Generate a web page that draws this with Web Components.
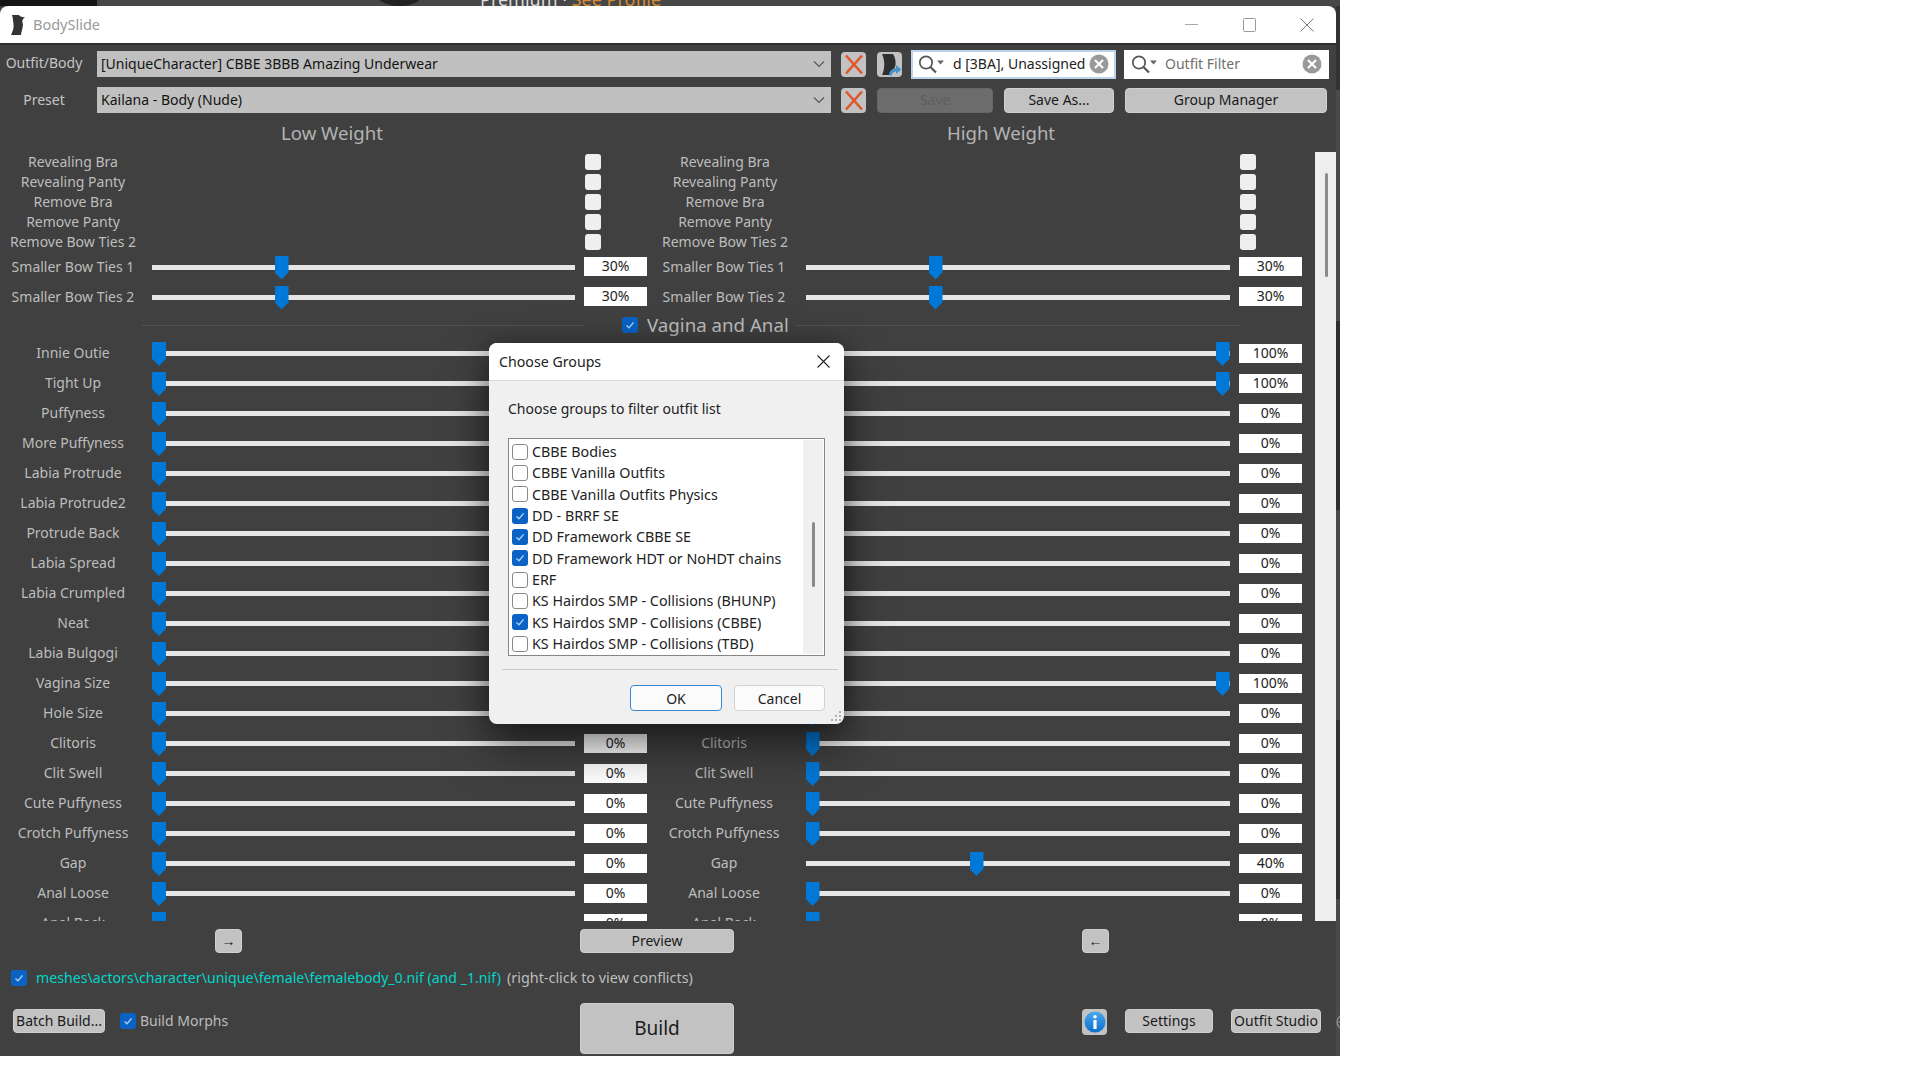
<!DOCTYPE html>
<html>
<head>
<meta charset="utf-8">
<title>BodySlide</title>
<style>
  html, body { margin: 0; background: #fff; }
  body { font-family: "Noto Sans", "Open Sans", sans-serif; font-size: 14px; width: 1920px; height: 1080px; overflow: hidden; position: relative; }
</style>
</head>
<body>
<bs-desktop>
  <bs-window>
    <bs-toolbar></bs-toolbar>
    <bs-panel>
      <bs-check-row label="Revealing Bra"></bs-check-row>
      <bs-check-row label="Revealing Panty"></bs-check-row>
      <bs-check-row label="Remove Bra"></bs-check-row>
      <bs-check-row label="Remove Panty"></bs-check-row>
      <bs-check-row label="Remove Bow Ties 2"></bs-check-row>
      <bs-row label="Smaller Bow Ties 1" low="30" high="30"></bs-row>
      <bs-row label="Smaller Bow Ties 2" low="30" high="30"></bs-row>
      <bs-section label="Vagina and Anal"></bs-section>
      <!-- covered: the dialog lies over the left value and the right label of these rows -->
      <bs-row covered label="Innie Outie" low="0" high="100"></bs-row>
      <bs-row covered label="Tight Up" low="0" high="100"></bs-row>
      <bs-row covered label="Puffyness" low="0" high="0"></bs-row>
      <bs-row covered label="More Puffyness" low="0" high="0"></bs-row>
      <bs-row covered label="Labia Protrude" low="0" high="0"></bs-row>
      <bs-row covered label="Labia Protrude2" low="0" high="0"></bs-row>
      <bs-row covered label="Protrude Back" low="0" high="0"></bs-row>
      <bs-row covered label="Labia Spread" low="0" high="0"></bs-row>
      <bs-row covered label="Labia Crumpled" low="0" high="0"></bs-row>
      <bs-row covered label="Neat" low="0" high="0"></bs-row>
      <bs-row covered label="Labia Bulgogi" low="0" high="0"></bs-row>
      <bs-row covered label="Vagina Size" low="0" high="100"></bs-row>
      <bs-row covered label="Hole Size" low="0" high="0"></bs-row>
      <bs-row label="Clitoris" low="0" high="0"></bs-row>
      <bs-row label="Clit Swell" low="0" high="0"></bs-row>
      <bs-row label="Cute Puffyness" low="0" high="0"></bs-row>
      <bs-row label="Crotch Puffyness" low="0" high="0"></bs-row>
      <bs-row label="Gap" low="0" high="40"></bs-row>
      <bs-row label="Anal Loose" low="0" high="0"></bs-row>
      <bs-row label="Anal Back" low="0" high="0"></bs-row>
    </bs-panel>
    <bs-footer></bs-footer>
  </bs-window>
</bs-desktop>

<bs-dialog>
  <bs-item>CBBE Bodies</bs-item>
  <bs-item>CBBE Vanilla Outfits</bs-item>
  <bs-item>CBBE Vanilla Outfits Physics</bs-item>
  <bs-item checked>DD - BRRF SE</bs-item>
  <bs-item checked>DD Framework CBBE SE</bs-item>
  <bs-item checked>DD Framework HDT or NoHDT chains</bs-item>
  <bs-item>ERF</bs-item>
  <bs-item>KS Hairdos SMP - Collisions (BHUNP)</bs-item>
  <bs-item checked>KS Hairdos SMP - Collisions (CBBE)</bs-item>
  <bs-item>KS Hairdos SMP - Collisions (TBD)</bs-item>
</bs-dialog>

<script>
const FONT = `"Noto Sans", "Open Sans", sans-serif`;
const CHECK_SVG = `<svg viewBox="0 0 16 16" width="16" height="16"><path d="M4.5 8.4 7 10.8 11.6 5.4" fill="none" stroke="#a9d0f2" stroke-width="1.4"/></svg>`;

class BsBox extends HTMLElement {
    constructor() {
        super();
        this.myRoot = this.attachShadow({ mode: "open" });
    }
    connectedCallback() {
        this.myRoot.innerHTML = this.render();
    }
}

class BsCheck extends BsBox {
    render() {
        const on = this.hasAttribute("checked");
        return `<style>
            :host { display: block; width: 16px; height: 16px; flex: none; }
            div { width: 16px; height: 16px; box-sizing: border-box; border-radius: 3px;
                  background: ${on ? "#0a62c4" : "#efefef"}; }
            svg { display: block; }
        </style><div>${on ? CHECK_SVG : ""}</div>`;
    }
}
customElements.define("bs-check", BsCheck);

class BsBtn extends BsBox {
    render() {
        const off = this.hasAttribute("disabled");
        const size = this.getAttribute("size") ?? "14";
        return `<style>
            :host { display: flex; flex: none; height: 25px; }
            button { all: unset; box-sizing: border-box; width: 100%; height: 100%; display: flex;
                     align-items: center; justify-content: center; border-radius: 4px;
                     font: ${size}px ${FONT}; white-space: nowrap; padding-bottom: 1px;
                     background: ${off ? "#6c6c6c" : "#c2c2c2"}; color: ${off ? "#5e5e5e" : "#1a1a1a"};
                     border: 1px solid ${off ? "#666" : "#cfcfcf"}; }
        </style><button><slot></slot></button>`;
    }
}
customElements.define("bs-btn", BsBtn);

class BsCombo extends BsBox {
    render() {
        return `<style>
            :host { display: flex; width: 734px; height: 26px; flex: none; background: #c0c0c0; align-items: center;
                    box-sizing: border-box; padding: 0 4px; color: #141414; font: 14px ${FONT}; justify-content: space-between; }
            span { padding-bottom: 1px; }
            svg { margin-right: 2px; }
        </style><span><slot></slot></span>
        <svg width="12" height="8" viewBox="0 0 12 8"><path d="M1 1.5 6 6.5 11 1.5" fill="none" stroke="#555" stroke-width="1.1"/></svg>`;
    }
}
customElements.define("bs-combo", BsCombo);

class BsCross extends BsBox {
    render() {
        return `<style>
            :host { display: flex; width: 25px; height: 25px; flex: none; background: #c2c2c2; border-radius: 4px;
                    align-items: center; justify-content: center; }
        </style><svg width="20" height="21" viewBox="0 0 20 21"><path d="M2 1.5 18 19.5M18 1.5 2 19.5" stroke="#e0562a" stroke-width="2.6" fill="none"/></svg>`;
    }
}
customElements.define("bs-cross", BsCross);

class BsSearch extends BsBox {
    render() {
        const ph = this.hasAttribute("placeholder");
        const text = ph ? this.getAttribute("placeholder") : this.getAttribute("value");
        return `<style>
            :host { display: flex; width: 205px; height: 29px; flex: none; box-sizing: border-box; background: #fff;
                    align-items: center; font: 14px ${FONT}; color: ${ph ? "#6f6f6f" : "#222"};
                    border: ${this.hasAttribute("focused") ? "2px solid #bcd3ee" : "2px solid #fff"}; }
            .ico { margin-left: 4px; flex: none; }
            span { flex: 1; margin-left: ${ph ? "7px" : "8px"}; white-space: nowrap; overflow: hidden; padding-bottom: 3px; }
            .clr { flex: none; margin-right: 5px; margin-bottom: 1px; }
        </style>
        <svg class="ico" width="28" height="22" viewBox="0 0 28 22">
            <circle cx="9" cy="8.5" r="6.2" fill="none" stroke="#555" stroke-width="1.7"/>
            <path d="M13.5 13 19 18.5" stroke="#555" stroke-width="2.2"/>
            <path d="M20 6.5h7l-3.5 4z" fill="#666"/>
        </svg>
        <span>${text}</span>
        <svg class="clr" width="20" height="20" viewBox="0 0 20 20">
            <circle cx="10" cy="10" r="9.5" fill="#9a9a9a"/>
            <path d="M6 6 14 14M14 6 6 14" stroke="#fff" stroke-width="2.2"/>
        </svg>`;
    }
}
customElements.define("bs-search", BsSearch);

class BsDesktop extends BsBox {
    render() {
        return `<style>
            :host { display: flex; flex-direction: column; width: 1340px; height: 1056px; background: #3c3c3c; }
            .top { height: 6px; flex: none; overflow: hidden; display: flex; background: #474747; font: 18px/20px ${FONT}; white-space: nowrap; }
            .dark { width: 97px; background: #141414; flex: none; }
            .blob { width: 45px; height: 22px; margin: -16px 0 0 280px; flex: none; background: #222; border-radius: 50%; }
            .promo { margin: -11px 0 0 58px; color: #ddd; }
            .promo b { font-weight: 400; color: #d78a35; }
            .main { flex: 1; display: flex; min-height: 0; }
            .edge { width: 4px; flex: none; position: relative; overflow: hidden;
                    background: linear-gradient(#333 0 8%, #4a4a4a 8% 30%, #2f2f2f 30% 48%, #4a4a4a 48% 68%, #333 68% 85%, #4a4a4a 85%); }
            .edge svg { position: absolute; left: 0; top: 1006px; }
        </style>
        <div class="top"><div class="dark"></div><div class="blob"></div><div class="promo">Premium &middot; <b>See Profile</b></div></div>
        <div class="main"><slot></slot>
            <div class="edge"><svg width="12" height="20" viewBox="0 0 12 20"><circle cx="8" cy="10" r="7" fill="none" stroke="#999" stroke-width="1.2"/><path d="M2 10h8" stroke="#999"/></svg></div>
        </div>`;
    }
}
customElements.define("bs-desktop", BsDesktop);

class BsWindow extends BsBox {
    render() {
        return `<style>
            :host { display: flex; flex-direction: column; width: 1336px; flex: none; background: #404040; }
            .title { height: 37px; flex: none; background: #fff; border-radius: 8px 8px 0 0; display: flex; align-items: center;
                     font: 14.5px ${FONT}; color: #9a9a9a; }
            .logo { margin-left: 10px; flex: none; }
            .name { margin-left: 7px; flex: 1; padding-bottom: 2px; }
            .line { height: 2px; flex: none; background: #2e2e2e; }
            .win { display: flex; align-items: center; width: 58px; justify-content: center; flex: none; }
            .ctl { display: flex; }
        </style>
        <div class="title">
            <svg class="logo" width="16" height="22" viewBox="0 0 16 22"><path d="M2 1 9 1C10 3 13 3 15 3.5 12 5 12 8 13 10 13 14 11 18 11 21L1 21C3 17 4 13 3.5 10 3 7 3 4 2 1Z" fill="#333"/></svg>
            <div class="name">BodySlide</div>
            <div class="ctl">
                <div class="win"><svg width="13" height="13" viewBox="0 0 13 13"><path d="M0 6.5h13" stroke="#aaa"/></svg></div>
                <div class="win"><svg width="13" height="14" viewBox="0 0 13 14"><rect x=".5" y=".5" width="12" height="13" rx="1" fill="none" stroke="#999"/></svg></div>
                <div class="win"><svg width="14" height="14" viewBox="0 0 14 14"><path d="M.5.5 13.5 13.5M13.5.5.5 13.5" stroke="#777"/></svg></div>
            </div>
        </div>
        <div class="line"></div>
        <slot></slot>`;
    }
}
customElements.define("bs-window", BsWindow);

class BsToolbar extends BsBox {
    render() {
        return `<style>
            :host { display: block; color: #c4c4c4; font: 14px ${FONT}; }
            .row { display: flex; align-items: center; }
            .r1 { height: 29px; margin-top: 5px; align-items: flex-start; }
            .r1 .lbl { line-height: 26px; margin-top: 0; }
            .r1 bs-combo { margin-top: 1px; }
            .r1 bs-cross, .r1 .i { margin-top: 2px; }
            .r2 { height: 26px; margin-top: 8px; }
            .lbl { width: 88px; text-align: center; flex: none; margin-right: 9px; }
            .r2 .lbl { padding-bottom: 1px; }
            .heads { display: grid; grid-template-columns: 664px 674px; height: 39px; align-items: center; text-align: center;
                     font-size: 18.6px; color: #b4b4b4; }
            .i { background: #c2c2c2; width: 25px; height: 25px; border-radius: 4px; flex: none; }
        </style>
        <div class="row r1">
            <div class="lbl">Outfit/Body</div>
            <bs-combo>[UniqueCharacter] CBBE 3BBB Amazing Underwear</bs-combo>
            <bs-cross style="margin-left:10px"></bs-cross>
            <svg class="i" style="margin-left:11px" viewBox="0 0 25 25">
                <path d="M5 2 16 2C18 5 19 9 18.5 13 18 16 16 19 13 23L5 23C8 17 8 8 5 2Z" fill="#2f2f2f"/>
                <path d="M12 23C12.500 19 15 16.500 19 16L19 13 24.500 17.500 19 22 19 19.500C16.500 19.500 15 21 14.500 24Z" fill="#4a94cc"/>
            </svg>
            <bs-search focused value="d [3BA], Unassigned" style="margin-left:9px"></bs-search>
            <bs-search placeholder="Outfit Filter" style="margin-left:8px"></bs-search>
        </div>
        <div class="row r2">
            <div class="lbl">Preset</div>
            <bs-combo>Kailana - Body (Nude)</bs-combo>
            <bs-cross style="margin-left:10px"></bs-cross>
            <bs-btn disabled style="width:116px;margin-left:11px">Save</bs-btn>
            <bs-btn style="width:110px;margin-left:11px">Save As...</bs-btn>
            <bs-btn style="width:202px;margin-left:11px">Group Manager</bs-btn>
        </div>
        <div class="heads"><div>Low Weight</div><div>High Weight</div></div>`;
    }
}
customElements.define("bs-toolbar", BsToolbar);

class BsPanel extends BsBox {
    render() {
        return `<style>
            :host { display: flex; height: 769px; flex: none; overflow: hidden; }
            .rows { width: 1315px; flex: none; overflow: hidden; }
            .bar { width: 21px; flex: none; background: #eeeeee; box-sizing: border-box; padding: 21px 0 0 10px; }
            .thumb { width: 2.5px; height: 104px; background: #8a8a8a; border-radius: 2px; }
        </style>
        <div class="rows"><slot></slot></div>
        <div class="bar"><div class="thumb"></div></div>`;
    }
}
customElements.define("bs-panel", BsPanel);

class BsCheckRow extends BsBox {
    render() {
        const label = this.getAttribute("label");
        return `<style>
            :host { display: flex; height: 20px; align-items: center; color: #bdbdbd; font: 14px ${FONT}; }
            .l { width: 146px; text-align: center; flex: none; white-space: nowrap; padding-bottom: 2px; }
            .a { margin-left: 439px; }
            .l2 { margin-left: 51px; }
            .b { margin-left: 442px; }
        </style>
        <div class="l">${label}</div><bs-check class="a"></bs-check>
        <div class="l l2">${label}</div><bs-check class="b"></bs-check>`;
    }
}
customElements.define("bs-check-row", BsCheckRow);

class BsSlider extends BsBox {
    render() {
        const pct = Number(this.getAttribute("value"));
        const label = this.hasAttribute("nolabel") ? "" : this.getAttribute("label");
        const value = this.hasAttribute("novalue") ? "" : `${pct}%`;
        return `<style>
            :host { display: flex; align-items: center; height: 30px; flex: none; color: #bdbdbd; font: 14px ${FONT}; }
            .l { width: 146px; flex: none; text-align: center; white-space: nowrap; padding-bottom: 2px; }
            .track { flex: 1; height: 5px; background: #e6e6e6; position: relative; }
            .thumb { position: absolute; top: -9px; width: 14px; height: 24px; background: #0078d7;
                     left: calc((100% - 14px) * ${pct / 100});
                     clip-path: polygon(0 0, 100% 0, 100% 70%, 50% 100%, 0 70%); }
            .v { width: 63px; height: 19px; line-height: 18px; background: #fff; flex: none; color: #222; text-align: center;
                 margin-left: 9.5px; margin-bottom: 1px; }
        </style>
        <div class="l">${label}</div>
        <div class="track" style="margin-left:${this.getAttribute("gap")}px"><div class="thumb"></div></div>
        <div class="v">${value}</div>`;
    }
}
customElements.define("bs-slider", BsSlider);

class BsRow extends BsBox {
    render() {
        const label = this.getAttribute("label");
        const covered = this.hasAttribute("covered");
        return `<style>
            :host { display: flex; height: 30px; }
        </style>
        <bs-slider ${covered ? "novalue" : ""} style="width:647px" gap="6" label="${label}" value="${this.getAttribute("low")}"></bs-slider>
        <bs-slider ${covered ? "nolabel" : ""} style="width:651px;margin-left:4px" gap="8.5" label="${label}" value="${this.getAttribute("high")}"></bs-slider>`;
    }
}
customElements.define("bs-row", BsRow);

class BsSection extends BsBox {
    render() {
        return `<style>
            :host { display: flex; height: 26.5px; align-items: center; color: #bdbdbd; font: 18.7px ${FONT}; }
            hr { height: 1px; border: 0; margin: 0; background: #535353; flex: none; }
            span { width: 141px; margin-left: 9px; white-space: nowrap; flex: none; padding-bottom: 2px; }
        </style>
        <hr style="margin-left:142px;width:442px">
        <bs-check checked style="margin-left:38px"></bs-check>
        <span>${this.getAttribute("label")}</span>
        <hr style="margin-left:8px;width:443px">`;
    }
}
customElements.define("bs-section", BsSection);

class BsFooter extends BsBox {
    render() {
        return `<style>
            :host { display: block; font: 14px ${FONT}; color: #bdbdbd; }
            .arrows { display: flex; margin-top: 8px; height: 24px; }
            .conflict { display: flex; align-items: center; height: 16px; margin-top: 17px; padding-left: 11px; white-space: nowrap; }
            .conflict b { font-weight: 400; font-size: 14.15px; color: #00d6cc; margin-left: 9px; padding-bottom: 1px; }
            .conflict i { font-style: normal; font-size: 14.4px; margin-left: 6px; padding-bottom: 1px; }
            .bottom { display: flex; align-items: flex-start; height: 53px; margin-top: 17px; }
            .bottom > * { margin-top: 6px; }
            .morph { margin-left: 4px; }
            bs-btn { height: 24px; }
            .info { width: 25px; height: 26px; background: #c2c2c2; border-radius: 4px; flex: none; display: flex; align-items: center; justify-content: center; }
        </style>
        <div class="arrows">
            <bs-btn style="width:27px;margin-left:215px"><b>&#8594;</b></bs-btn>
            <bs-btn style="width:154px;margin-left:338px">Preview</bs-btn>
            <bs-btn style="width:27px;margin-left:348px"><b>&#8592;</b></bs-btn>
        </div>
        <div class="conflict">
            <bs-check checked></bs-check>
            <b>meshes\\actors\\character\\unique\\female\\femalebody_0.nif (and _1.nif)</b>
            <i>(right-click to view conflicts)</i>
        </div>
        <div class="bottom">
            <bs-btn style="width:92px;margin-left:13px">Batch Build...</bs-btn>
            <bs-check checked style="margin-left:15px;margin-top:10px"></bs-check>
            <span class="morph" style="width:440px;margin-top:8px">Build Morphs</span>
            <bs-btn size="19" style="width:154px;height:51px;margin-top:0">Build</bs-btn>
            <div class="info" style="margin-left:348px">
                <svg width="22" height="22" viewBox="0 0 22 22">
                    <defs><linearGradient id="g" x1="0" y1="0" x2="0" y2="1"><stop offset="0" stop-color="#4aa8ec"/><stop offset="1" stop-color="#0a6fd0"/></linearGradient></defs>
                    <circle cx="11" cy="11" r="10.5" fill="url(#g)"/>
                    <circle cx="11" cy="5.8" r="1.8" fill="#fff"/>
                    <rect x="9.4" y="9" width="3.2" height="9" fill="#fff"/>
                </svg>
            </div>
            <bs-btn style="width:88px;margin-left:18px">Settings</bs-btn>
            <bs-btn style="width:90px;margin-left:18px">Outfit Studio</bs-btn>
        </div>`;
    }
}
customElements.define("bs-footer", BsFooter);

class BsItem extends BsBox {
    render() {
        const on = this.hasAttribute("checked");
        return `<style>
            :host { display: flex; align-items: center; height: 21.33px; white-space: nowrap; color: #222; font: 14.3px ${FONT}; }
            .box { width: 16px; height: 16px; box-sizing: border-box; border-radius: 3px; flex: none; margin-right: 4px;
                   border: ${on ? "0" : "1.5px solid #8a8a8a"}; background: ${on ? "#0a62c4" : "#fff"}; }
            svg { display: block; }
        </style>
        <div class="box">${on ? CHECK_SVG : ""}</div><slot></slot>`;
    }
}
customElements.define("bs-item", BsItem);

class BsDialog extends BsBox {
    render() {
        return `<style>
            :host { position: absolute; left: 489px; top: 343px; width: 355px; height: 381px; border-radius: 8px; overflow: visible;
                    display: flex; flex-direction: column; background: #f0f0f0; color: #222; font: 14px ${FONT};
                    box-shadow: 0 22px 46px rgba(0,0,0,.5), 0 0 24px rgba(0,0,0,.3); }
            .head { height: 37px; flex: none; background: #fff; border-bottom: 1px solid #d8d8d8; border-radius: 8px 8px 0 0;
                    display: flex; align-items: center; justify-content: space-between; padding: 0 14px 0 10px; font-size: 14.2px; }
            .head span { padding-bottom: 1px; }
            .body { flex: 1; padding: 18px 19px 0; display: flex; flex-direction: column; position: relative; }
            .msg { height: 20px; line-height: 20px; flex: none; }
            .list { margin-top: 19px; height: 218px; flex: none; box-sizing: border-box; border: 1px solid #868686; background: #fff; display: flex; overflow: hidden; }
            .items { flex: 1; padding: 2px 0 0 3px; }
            .sb { width: 20px; flex: none; background: #f0f0f0; margin: 1px 1px 1px 0; box-sizing: border-box; padding: 82px 0 0 9px; }
            .sb div { width: 2.5px; height: 65px; background: #8a8a8a; border-radius: 2px; }
            .sep { height: 1px; background: #c8c8c8; margin: 13px -13px 0 -6px; flex: none; }
            .btns { display: flex; justify-content: flex-end; gap: 12px; margin-top: 15px; }
            button { all: unset; box-sizing: border-box; height: 26px; display: flex; align-items: center; justify-content: center; border-radius: 4px; font: 14px ${FONT}; color: #222; background: #fbfbfb; border: 1px solid #d2d2d2; }
            .ok { width: 92px; border: 1.5px solid #3b87cf; }
            .cancel { width: 91px; }
            .grip { position: absolute; right: 2px; bottom: 2px; }
        </style>
        <div class="head"><span>Choose Groups</span>
            <svg width="13" height="13" viewBox="0 0 13 13"><path d="M.5.5 12.5 12.5M12.5.5.5 12.5" stroke="#222" stroke-width="1.1"/></svg>
        </div>
        <div class="body">
            <div class="msg">Choose groups to filter outfit list</div>
            <div class="list"><div class="items"><slot></slot></div><div class="sb"><div></div></div></div>
            <div class="sep"></div>
            <div class="btns"><button class="ok">OK</button><button class="cancel">Cancel</button></div>
            <svg class="grip" width="11" height="11" viewBox="0 0 11 11" fill="#b0b0b0">
                <rect x="8" y="0" width="2" height="2"/><rect x="4" y="4" width="2" height="2"/><rect x="8" y="4" width="2" height="2"/>
                <rect x="0" y="8" width="2" height="2"/><rect x="4" y="8" width="2" height="2"/><rect x="8" y="8" width="2" height="2"/>
            </svg>
        </div>`;
    }
}
customElements.define("bs-dialog", BsDialog);
</script>
</body>
</html>
